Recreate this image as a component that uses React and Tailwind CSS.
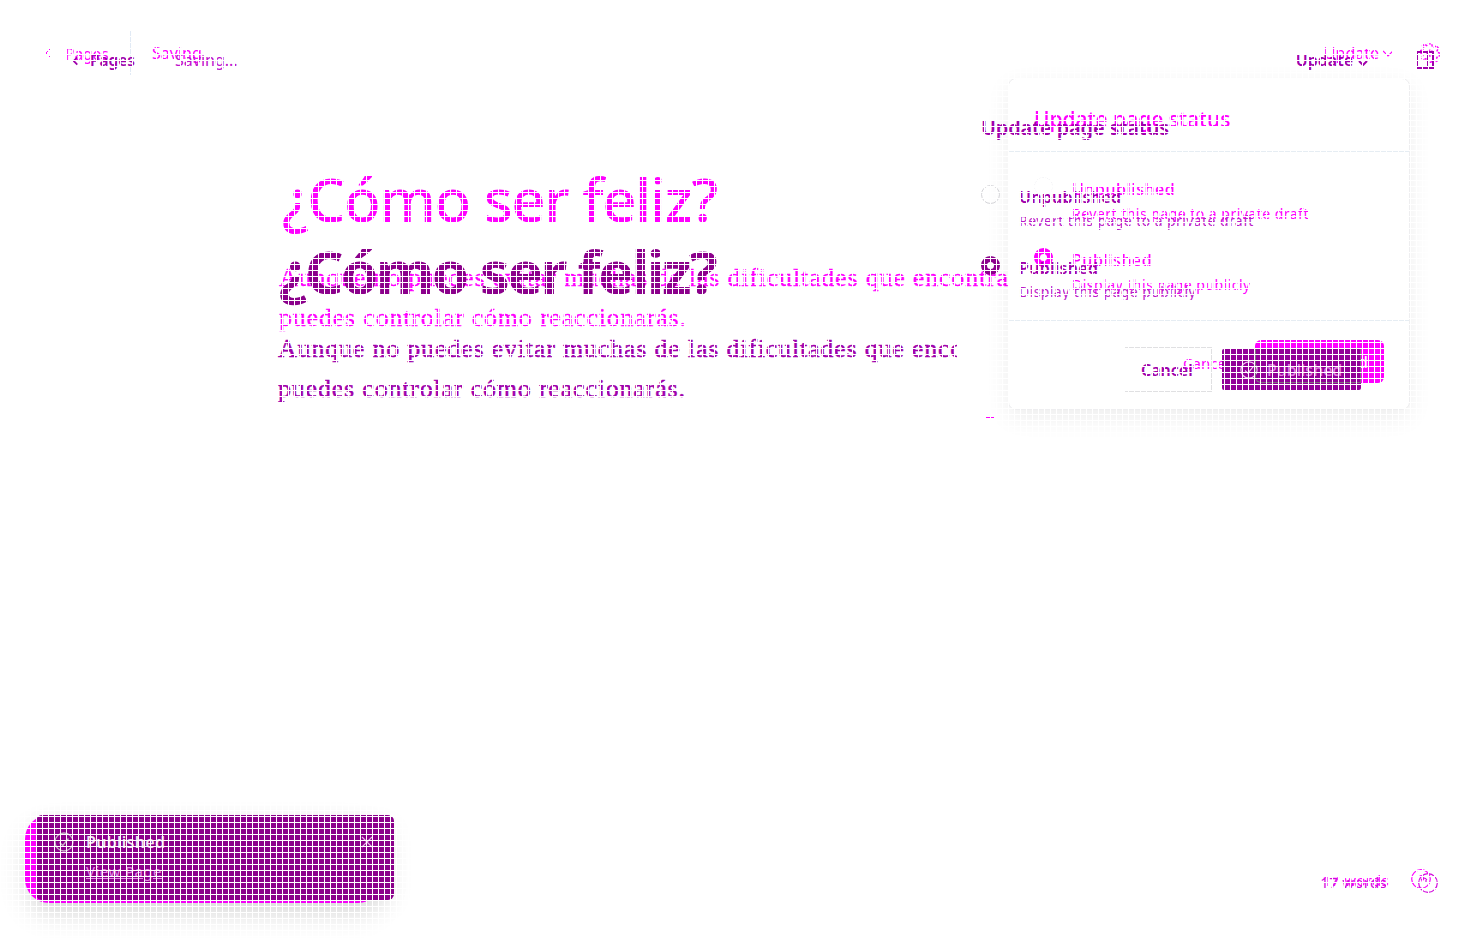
import React from 'react';

const SANS = "font-['Noto_Sans','Open_Sans',sans-serif]";
const SERIF = "font-['Liberation_Serif',serif]";

function CheckCircle({ className }) {
  return (
    <svg className={className} viewBox="0 0 20 20" fill="none" stroke="currentColor" strokeWidth="1.3">
      <circle cx="10" cy="10" r="9" />
      <path d="M5.5 10.5l3.3 3L14.5 6.5" />
    </svg>
  );
}

function Chevron({ className, d, width }) {
  return (
    <svg className={className} viewBox="0 0 10 10" fill="none" stroke="currentColor" strokeWidth={width}>
      <path d={d} />
    </svg>
  );
}

function Option({ mark, title, text, titleClass, textClass, gap }) {
  return (
    <div className={`flex h-[71px] items-start ${gap}`}>
      {mark}
      <div className="flex flex-col whitespace-nowrap">
        <span className={titleClass}>{title}</span>
        <span className={textClass}>{text}</span>
      </div>
    </div>
  );
}

function LightLayer() {
  const t = 'text-[16px] leading-[24px] tracking-[0.55px] font-medium';
  const p = 'text-[14px] leading-[25px] tracking-[0.48px]';
  return (
    <div className="col-start-1 row-start-1 flex h-[938px] w-[1483px] flex-col text-[#ff00ff]">
      <header className="flex h-[78px] items-start text-[16px] leading-[22px]">
        <Chevron className="ml-[44px] mt-[48px] h-[10px] w-[10px]" d="M6 1L2 5l4 4" width="1" />
        <span className="ml-[11px] mt-[43px] w-[65px] text-[15.500px]">Pages</span>
        <span className="mt-[31px] h-[44px] w-px bg-[#e1eaf5]" />
        <span className="ml-[21px] mt-[42px]">Saving</span>
        <span className="ml-auto mt-[42px]">Update</span>
        <Chevron className="ml-[4px] mt-[49px] h-[10px] w-[10px]" d="M0 2l5 5 5-5" width="1.2" />
        <svg className="ml-[27px] mr-[43px] mt-[43px] h-[20px] w-[20px]" viewBox="0 0 24 24" fill="none" stroke="currentColor" strokeWidth="1.7" strokeDasharray="3 1.5">
          <circle cx="12" cy="12" r="3.5" />
          <path d="M10 1h4l.7 3 2.3 1 2.8-1.5 2.5 3-1.8 2.5.6 2.3 2.9 1v3l-3 .8-1 2 1.3 2.8-2.6 2.2-2.5-1.7-2.2.8L13 23h-3l-1-3-2.2-1-2.8 1.4-2.2-2.6L3.500 15 3 12.700.5 12V9l3-.8 1-2L3 3.500 5.500 1.500 8 3z" />
        </svg>
      </header>
      <div className="flex h-[737px] items-start">
        <article className="h-[737px] w-[1008px] overflow-hidden whitespace-nowrap pl-[279px] pt-[85px]">
          <h1 className="pl-[3px] text-[60px] font-medium leading-[72px] tracking-[-1.5px]">¿Cómo ser feliz?</h1>
          <p className={`${SERIF} mt-[23px] text-[26px] leading-[40px] tracking-[0.8px] [-webkit-text-stroke:0.3px]`}>
            Aunque no puedes evitar muchas de las dificultades que encontra<br />
            puedes controlar cómo reaccionarás.
          </p>
        </article>
        <section className="flex h-[332px] w-[402px] flex-col rounded-[8px] border border-[#eeeef0] bg-white shadow-[0_8px_24px_rgba(0,0,0,0.07)]">
          <h2 className="h-[73px] border-b border-[#e6edf3] pl-[25px] pt-[26px] text-[21px] font-medium leading-[28px]">Update page status</h2>
          <div className="h-[169px] border-b border-[#e6edf3] pl-[25px] pt-[25px]">
            <Option gap="gap-[19px]" title="Unpublished" text="Revert this page to a private draft" titleClass={t} textClass={p}
              mark={<span className="h-[19px] w-[19px] rounded-full border border-dotted border-[#f1f1f4]" />} />
            <Option gap="gap-[19px]" title="Published" text="Display this page publicly" titleClass={t} textClass={p}
              mark={<span className="h-[19px] w-[19px] rounded-full border-[6px] border-[#ff00ff]" />} />
          </div>
          <div className="flex items-start">
            <span className="ml-[174px] mt-[31px] w-[72px] text-[15px] leading-[22px]">Cance</span>
            <span className="mt-[19px] flex h-[43px] w-[129px] items-center justify-end rounded-[6px] bg-[#ff00ff] pr-[16px] text-[16px] font-medium text-white">Published</span>
          </div>
        </section>
      </div>
      <footer className="flex h-[123px] items-start">
        <div className="ml-[25px] h-[88px] w-[357px] rounded-[24px] bg-[#ff00ff] shadow-[0_12px_28px_rgba(0,0,0,0.12)]" />
        <span className="ml-auto mt-[54px] text-[15px] leading-[22px] tracking-[0.3px]">17 words</span>
        <svg className="ml-[22px] mr-[52px] mt-[54px] h-[20px] w-[20px]" viewBox="0 0 20 20" fill="none" stroke="currentColor" strokeWidth="1.2">
          <circle cx="10" cy="10" r="9.300" />
          <path d="M8 8q2-3 4 0t-2 4" />
        </svg>
      </footer>
    </div>
  );
}

function DarkLayer() {
  const t = 'text-[16px] leading-[24px] tracking-[0.3px] font-semibold';
  const p = 'text-[14px] leading-[24px] tracking-[0.42px] text-[#bd1bc9]';
  return (
    <div className="relative col-start-1 row-start-1 flex h-[938px] w-[1483px] flex-col text-[#a000ac]">
      <header className="flex h-[78px] items-start text-[16px] leading-[22px]">
        <Chevron className="ml-[71px] mt-[55px] h-[12px] w-[9px]" d="M7 1L3 5l4 4" width="2" />
        <span className="ml-[10px] mt-[49px] w-[45px] text-[15.500px] font-semibold">Pages</span>
        <span className="ml-[40px] mt-[49px] text-[16px] text-[#c010cc]">Saving...</span>
        <span className="ml-auto mt-[49px] font-semibold">Update</span>
        <Chevron className="ml-[5px] mt-[58px] h-[10px] w-[10px]" d="M1 3l4 4 4-4" width="2" />
        <svg className="ml-[48px] mr-[48px] mt-[51px] h-[18px] w-[19px]" viewBox="0 0 19 18" fill="none" stroke="currentColor" strokeWidth="2">
          <path d="M1 1h16v16H1zM12 1v16" />
        </svg>
      </header>
      <div className="flex h-[737px] items-start">
        <article className="h-[737px] w-[957px] overflow-hidden whitespace-nowrap pl-[278px] pt-[157px]">
          <h1 className="pl-px text-[60px] font-bold leading-[72px] tracking-[-2.6px] text-[#8b008b]">¿Cómo ser feliz?</h1>
          <p className={`${SERIF} mt-[22px] text-[26px] leading-[40px] tracking-[0.8px] [-webkit-text-stroke:0.5px]`}>
            Aunque no puedes evitar muchas de las dificultades que encon<br />
            puedes controlar cómo reaccionarás.
          </p>
        </article>
        <section className="ml-[24px] flex w-[382px] flex-col pt-[36px]">
          <h2 className="text-[20px] font-semibold leading-[28px] tracking-[-0.15px]">Update page status</h2>
          <div className="h-[155px] pt-[43px]">
            <Option gap="gap-[19px]" title="Unpublished" text="Revert this page to a private draft" titleClass={t} textClass={p}
              mark={<span className="h-[19px] w-[19px] rounded-full border border-[#d4d4d8]" />} />
            <Option gap="gap-[19px]" title="Published" text="Display this page publicly" titleClass={t} textClass={p}
              mark={<span className="h-[19px] w-[19px] rounded-full border-[6px] border-[#8b008b]" />} />
          </div>
          <div className="mt-[50px] flex items-start">
            <span className="ml-[144px] flex h-[45px] w-[87px] items-center border border-l-0 border-[#e0e0e2] pl-[16px] text-[16px] font-semibold">Cancel</span>
            <span className="relative ml-[10px] mt-[2px] flex h-[41px] w-[139px] items-center rounded-[2px] bg-[#920098] text-[16px] font-medium text-[#e080e0]">
              <span className="absolute left-[33px] top-0 h-[34px] w-[106px] rounded-bl-[6px] border border-t-0 border-[#80707f]" />
              <CheckCircle className="ml-[18px] mr-[9px] h-[18px] w-[18px] text-[#f3c8f3]" />Published
            </span>
          </div>
          <span className="ml-[5px] mt-[25px] h-px w-[8px] bg-[#ff00ff]" />
        </section>
      </div>
      <footer className="flex h-[123px] items-start">
        <div className="ml-[36px] flex h-[85px] w-[358px] items-start rounded-[6px] bg-[#8b008b] text-[#f2e5f2] shadow-[0_8px_24px_rgba(0,0,0,0.05)]">
          <CheckCircle className="ml-[18px] mt-[17px] h-[20px] w-[20px] text-[#c9b4c9]" />
          <div className="ml-[12px] mt-[15px] flex flex-col whitespace-nowrap">
            <span className="text-[16px] font-semibold leading-[24px] tracking-[0.3px]">Published</span>
            <span className="mt-[5px] text-[15px] leading-[24px] tracking-[0.45px] text-[#e58be5] underline">View Page</span>
          </div>
          <svg className="ml-auto mr-[21px] mt-[21px] h-[12px] w-[12px] text-[#e9b0e9]" viewBox="0 0 12 12" stroke="currentColor" strokeWidth="1.2">
            <path d="M1 1l10 10M11 1L1 11" />
          </svg>
        </div>
        <span className="ml-auto mt-[56px] text-[15px] leading-[22px] tracking-[0.3px] text-[#d30add]">17 words</span>
        <svg className="ml-[31px] mr-[45px] mt-[58px] h-[20px] w-[20px]" viewBox="0 0 20 20" fill="none" stroke="#d30add" strokeWidth="1.2">
          <circle cx="10" cy="10" r="9.300" />
          <path d="M3 7q3-4 6 0M8 7v3" />
        </svg>
      </footer>
    </div>
  );
}

export default function App() {
  return (
    <main className={`${SANS} relative grid h-[938px] w-[1483px] overflow-hidden bg-white`}>
      <LightLayer />
      <DarkLayer />
      <div className="pointer-events-none absolute inset-0 bg-[linear-gradient(to_right,#fff_1px,transparent_1px),linear-gradient(to_bottom,#fff_1px,transparent_1px)] bg-[size:6px_6px]" />
    </main>
  );
}
